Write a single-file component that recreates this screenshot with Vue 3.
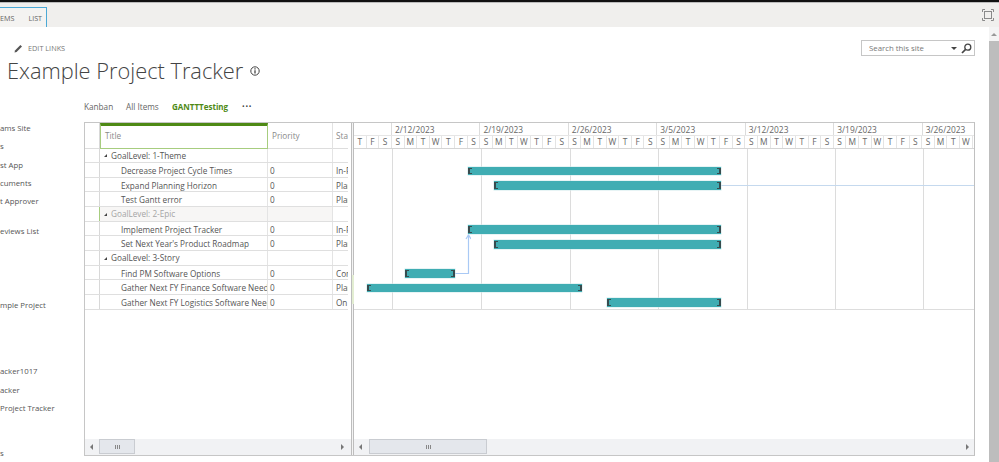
<template>
  <div class="page">
    <div class="blackbar"></div>
    <div class="ribbon">
      <div class="tab">
        <span class="tab-item">EMS</span>
        <span class="tab-item">LIST</span>
      </div>
      <svg class="focus-icon" width="12" height="12" viewBox="0 0 12 12" fill="none" stroke="#8a8a8a">
        <path d="M0.5 3V0.5H3M9 0.5H11.5V3M11.5 9V11.5H9M3 11.5H0.5V9" />
        <rect x="2.5" y="2.5" width="7" height="7" />
      </svg>
    </div>

    <div class="workspace">
      <div class="content">
        <div class="head">
          <div class="head-left">
            <div class="edit-links">
              <svg width="9" height="9" viewBox="0 0 9 9"><path d="M0.5 8.5L1 6.4L6.4 1L8 2.6L2.6 8Z" fill="#555" /></svg>
              <span>EDIT LINKS</span>
            </div>
            <div class="title-line">
              <h1>Example Project Tracker</h1>
              <svg width="10" height="10" viewBox="0 0 10 10" fill="none">
                <circle cx="5" cy="5" r="4.2" stroke="#444" />
                <path d="M5 4.2V7.6M5 2.2V3.4" stroke="#444" stroke-width="1.3" />
              </svg>
            </div>
          </div>
          <div class="search">
            <span class="search-text">Search this site</span>
            <span class="search-caret"></span>
            <svg width="11" height="11" viewBox="0 0 11 11" fill="none" stroke="#444">
              <circle cx="6.8" cy="4.2" r="3" stroke-width="1.3" />
              <path d="M4.6 6.4L1 10" stroke-width="1.7" />
            </svg>
          </div>
        </div>

        <div class="body">
          <nav class="side">
            <div v-for="item in navItems" :key="item.text + item.gap" class="side-item" :style="{ marginTop: item.gap + 'px' }">{{ item.text }}</div>
          </nav>

          <main class="main">
            <div class="views">
              <span class="view view-kanban">Kanban</span>
              <span class="view view-all">All Items</span>
              <span class="view view-active">GANTTTesting</span>
              <span class="view-more">•••</span>
            </div>

            <div class="gantt">
              <section class="pane-left">
                <div class="table">
                  <div class="thead">
                    <div class="cell-sel"></div>
                    <div class="th th-title">Title</div>
                    <div class="th">Priority</div>
                    <div class="th th-last">Status</div>
                  </div>
                  <div v-for="row in rows" :key="row.title" class="tr" :class="{ 'tr-epic': row.selected }">
                    <div class="cell-sel"></div>
                    <div class="td td-title" :class="row.group ? 'is-group' : 'is-task'">
                      <span v-if="row.group" class="caret"></span>{{ row.title }}
                    </div>
                    <div class="td td-line">{{ row.priority }}</div>
                    <div class="td td-status">{{ row.status }}</div>
                  </div>
                </div>
                <div class="hscroll hscroll-left">
                  <span class="arrow arrow-l"></span>
                  <span class="thumb thumb-left"><i></i></span>
                  <span class="arrow arrow-r"></span>
                </div>
              </section>

              <div class="splitter"><span class="splitter-handle"></span></div>

              <section class="pane-right">
                <div class="timeline">
                  <div class="dates">
                    <div v-for="d in dates" :key="d.label" class="date" :style="{ width: d.days * dayW + 'px' }">{{ d.label }}</div>
                  </div>
                  <div class="days">
                    <div v-for="(d, i) in days" :key="i" class="day" :style="{ width: dayW + 'px' }">{{ d }}</div>
                  </div>
                </div>
                <div class="chart">
                  <span v-for="x in weekLines" :key="x" class="week-line" :style="{ left: x + 'px' }"></span>
                  <span class="today-line"></span>
                  <svg class="link" width="16" height="44" viewBox="0 0 16 44" fill="none" stroke="#a9c9f5" stroke-width="1.2">
                    <path d="M0 40.5H13.5V2" />
                    <path d="M11 6L13.5 2L16 6" />
                  </svg>
                  <div
                    v-for="bar in bars"
                    :key="bar.top"
                    class="bar"
                    :style="{ left: bar.left + 'px', top: bar.top + 'px', width: bar.width + 'px' }"
                  ></div>
                </div>
                <div class="hscroll">
                  <span class="arrow arrow-l arrow-chart"></span>
                  <span class="thumb thumb-right"><i></i></span>
                  <span class="arrow arrow-r"></span>
                </div>
              </section>
            </div>
          </main>
        </div>
      </div>

      <div class="vscroll">
        <span class="vscroll-up"></span>
        <span class="vscroll-thumb"></span>
      </div>
    </div>
  </div>
</template>

<script setup>
const dayW = 12.64

const navItems = [
  { text: 'ams Site', gap: 0 },
  { text: 's', gap: 0 },
  { text: 'st App', gap: 0 },
  { text: 'cuments', gap: 0 },
  { text: 't Approver', gap: 0 },
  { text: 'eviews List', gap: 12 },
  { text: 'mple Project', gap: 55.5 },
  { text: 'acker1017', gap: 47.7 },
  { text: 'acker', gap: 0 },
  { text: 'Project Tracker', gap: 0 },
  { text: 's', gap: 26.7 }
]

const rows = [
  { title: 'GoalLevel: 1-Theme', group: true },
  { title: 'Decrease Project Cycle Times', priority: '0', status: 'In-Progress' },
  { title: 'Expand Planning Horizon', priority: '0', status: 'Planned' },
  { title: 'Test Gantt error', priority: '0', status: 'Planned' },
  { title: 'GoalLevel: 2-Epic', group: true, selected: true },
  { title: 'Implement Project Tracker', priority: '0', status: 'In-Progress' },
  { title: "Set Next Year's Product Roadmap", priority: '0', status: 'Planned' },
  { title: 'GoalLevel: 3-Story', group: true },
  { title: 'Find PM Software Options', priority: '0', status: 'Completed' },
  { title: 'Gather Next FY Finance Software Needs', priority: '0', status: 'Planned' },
  { title: 'Gather Next FY Logistics Software Needs', priority: '0', status: 'On Hold' }
]

const dates = [
  { label: '', days: 3 },
  { label: '2/12/2023', days: 7 },
  { label: '2/19/2023', days: 7 },
  { label: '2/26/2023', days: 7 },
  { label: '3/5/2023', days: 7 },
  { label: '3/12/2023', days: 7 },
  { label: '3/19/2023', days: 7 },
  { label: '3/26/2023', days: 7 }
]

const week = ['S', 'M', 'T', 'W', 'T', 'F', 'S']
const days = ['T', 'F', 'S']
for (let i = 0; i < 46; i++) days.push(week[i % 7])

const weekLines = [38, 126.5, 215.5, 304, 392.5, 480.5, 569]

// left and width in chart pixels, top from the start of the chart body
const bars = [
  { left: 114, top: 17.5, width: 253 },
  { left: 139.5, top: 32, width: 227.5 },
  { left: 114, top: 76, width: 253 },
  { left: 139.5, top: 91, width: 227.5 },
  { left: 51, top: 120, width: 50 },
  { left: 13, top: 134.5, width: 215 },
  { left: 253, top: 149, width: 114 }
]
</script>

<style>
html,
body {
  margin: 0;
  overflow: hidden;
}
</style>

<style scoped>
.page {
  width: 999px;
  height: 462px;
  display: flex;
  flex-direction: column;
  overflow: hidden;
  background: #fff;
  font-family: "Open Sans", "Noto Sans", sans-serif;
  color: #555;
}

.blackbar {
  height: 2px;
  background: #111;
  border-bottom: 1px solid #bbb;
}

.ribbon {
  height: 24px;
  flex: none;
  display: flex;
  align-items: flex-end;
  justify-content: space-between;
  background: #f0efed;
}

.tab {
  width: 47px;
  height: 20px;
  box-sizing: border-box;
  display: flex;
  align-items: center;
  gap: 14px;
  background: #f4f3f1;
  border-top: 1px solid #4ba9d6;
  border-right: 1px solid #4ba9d6;
  font-size: 7.2px;
  color: #666;
}

.focus-icon {
  margin: 0 5px 6px 0;
}

.workspace {
  flex: 1;
  display: flex;
  min-height: 0;
}

.content {
  flex: 1;
  display: flex;
  flex-direction: column;
  min-width: 0;
}

.vscroll {
  width: 10px;
  display: flex;
  flex-direction: column;
  align-items: center;
  background: #f4f4f4;
}

.vscroll-up {
  width: 0;
  height: 0;
  margin: 6px 0 5px;
  border-left: 3px solid transparent;
  border-right: 3px solid transparent;
  border-bottom: 3px solid #999;
}

.vscroll-thumb {
  width: 100%;
  flex: 1;
  background: #bdbdbd;
}

.head {
  display: flex;
  justify-content: space-between;
  height: 70px;
  padding-right: 14px;
}

.head-left {
  padding: 16px 0 0 7px;
}

.edit-links {
  display: flex;
  align-items: center;
  gap: 5px;
  margin-left: 7px;
  height: 10px;
  font-size: 7.3px;
  color: #777;
}

.title-line {
  display: flex;
  align-items: center;
  gap: 7px;
  margin-top: 2px;
}

h1 {
  margin: 0;
  font-size: 21.8px;
  line-height: 32px;
  font-weight: 300;
  color: #444;
}

.search {
  width: 114px;
  height: 16px;
  margin-top: 13px;
  box-sizing: border-box;
  display: flex;
  align-items: center;
  padding: 0 2px 0 7px;
  border: 1px solid #c6c6c6;
  font-size: 7.8px;
  color: #777;
}

.search-text {
  flex: 1;
}

.search-caret {
  width: 0;
  height: 0;
  margin-right: 4px;
  border-left: 3px solid transparent;
  border-right: 3px solid transparent;
  border-top: 3px solid #444;
}

.body {
  flex: 1;
  display: flex;
  min-height: 0;
}

.side {
  width: 84px;
  flex: none;
  padding-top: 22px;
  overflow: hidden;
}

.side-item {
  height: 18.3px;
  line-height: 18.3px;
  font-size: 7.8px;
  color: #555;
  white-space: nowrap;
}

.main {
  width: 891px;
  display: flex;
  flex-direction: column;
}

.views {
  height: 18px;
  margin-bottom: 7px;
  display: flex;
  align-items: center;
  font-size: 8.2px;
  color: #666;
}

.view-kanban {
  width: 42px;
}

.view-all {
  width: 46px;
}

.view-active {
  width: 70px;
  font-size: 8px;
  font-weight: 700;
  color: #4e8a15;
}

.view-more {
  font-size: 7px;
  letter-spacing: 0.8px;
  color: #444;
}

.gantt {
  width: 891px;
  height: 334px;
  box-sizing: border-box;
  display: flex;
  border: 1px solid #c6c6c6;
  border-right-color: #c0c0c0;
}

.pane-left {
  width: 266px;
  flex: none;
  display: flex;
  flex-direction: column;
  overflow: hidden;
}

.table {
  flex: 1;
  width: 263px;
}

.thead {
  display: grid;
  grid-template-columns: 15px 168px 65px 15px;
  height: 25.5px;
  border-bottom: 1px solid #ddd;
  box-sizing: border-box;
  color: #8a8a8a;
  font-size: 8.2px;
}

.cell-sel {
  border-right: 1px solid #d8d8d8;
}

.th {
  display: flex;
  align-items: center;
  padding: 0 0 2px 4px;
  border-right: 1px solid #e2e2e2;
  overflow: hidden;
  box-sizing: border-box;
}

.th-last {
  border-right: none;
  padding-left: 3px;
  white-space: nowrap;
}

.th-title {
  border: 1px solid #a7cd7f;
  border-top: 3px solid #4e8a15;
  padding-bottom: 4px;
  height: 26px;
}

.tr {
  display: grid;
  grid-template-columns: 15px 168px 65px 15px;
  height: 14.65px;
  box-sizing: border-box;
  border-bottom: 1px solid #dfdfdf;
  font-size: 8.2px;
  line-height: 14.6px;
}

.td {
  overflow: hidden;
  white-space: nowrap;
  box-sizing: border-box;
  padding-top: 1px;
  color: #555;
}

.td-title {
  border-right: 1px solid #e4e4e4;
}

.td-line {
  padding-left: 2px;
  border-right: 1px solid #e4e4e4;
}

.td-status {
  padding-left: 3px;
}

.is-group {
  display: flex;
  align-items: center;
  padding-left: 4px;
}

.is-task {
  padding-left: 21px;
}

.caret {
  width: 0;
  height: 0;
  margin-right: 4px;
  border-left: 3px solid transparent;
  border-bottom: 3px solid #444;
}

.tr-epic .td-title,
.tr-epic .td-line {
  background: #f7f6f5;
}

.tr-epic .td {
  color: #a5a5a5;
}

.tr-epic .cell-sel {
  border-right: 1px solid #a7cd7f;
}

.hscroll {
  height: 16px;
  flex: none;
  position: relative;
  display: flex;
  align-items: center;
  justify-content: space-between;
  background: #f1f2f4;
  padding: 0 5px;
  box-sizing: border-box;
}

.hscroll-left {
  padding-right: 7px;
}

.arrow {
  width: 0;
  height: 0;
  border-top: 3px solid transparent;
  border-bottom: 3px solid transparent;
}

.arrow-l {
  border-right: 3px solid #777;
}

.arrow-r {
  border-left: 3px solid #777;
}

.thumb {
  position: absolute;
  top: 0;
  bottom: 1px;
  display: flex;
  align-items: center;
  justify-content: center;
  box-sizing: border-box;
  background: #e4e7ec;
  border: 1px solid #c9ccd1;
}

.thumb i {
  width: 5px;
  height: 4px;
  background: repeating-linear-gradient(90deg, #888 0 1px, transparent 1px 2px);
}

.thumb-left {
  left: 14px;
  width: 36px;
}

.thumb-right {
  left: 15px;
  width: 118px;
}

.splitter {
  width: 3px;
  flex: none;
  position: relative;
  box-sizing: border-box;
  background: #f4f4f4;
  border-left: 1px solid #bdbdbd;
  border-right: 1px solid #bdbdbd;
}

.splitter-handle {
  position: absolute;
  left: 0;
  top: 152px;
  width: 2px;
  height: 29px;
  background: #e3eed2;
}

.pane-right {
  flex: 1;
  min-width: 0;
  display: flex;
  flex-direction: column;
  overflow: hidden;
}

.timeline {
  flex: none;
  border-bottom: 1px solid #d5d5d5;
}

.dates,
.days {
  display: flex;
  white-space: nowrap;
  color: #666;
}

.dates {
  height: 13px;
  box-sizing: border-box;
  font-size: 8.4px;
  line-height: 13px;
  border-bottom: 1px solid #e6e6e6;
}

.date {
  flex: none;
  box-sizing: border-box;
  padding-left: 3px;
  border-right: 1px solid #dcdcdc;
  overflow: hidden;
}

.days {
  height: 12px;
  font-size: 8.4px;
  line-height: 12px;
}

.day {
  flex: none;
  box-sizing: border-box;
  text-align: center;
  border-right: 1px solid #e4e4e4;
}

.chart {
  flex: 1;
  position: relative;
  overflow: hidden;
}

.chart::after {
  content: "";
  position: absolute;
  left: 0;
  right: 0;
  top: 160px;
  height: 1px;
  background: #ddd;
}

.week-line {
  position: absolute;
  top: 0;
  height: 160px;
  width: 1px;
  background: #dcdcdc;
}

.today-line {
  position: absolute;
  left: 367px;
  right: 0;
  top: 36px;
  height: 1px;
  background: #c5d9ee;
}

.link {
  position: absolute;
  left: 101px;
  top: 84px;
}

.bar {
  position: absolute;
  height: 8.5px;
  box-sizing: border-box;
  background: #40adb3;
  box-shadow: 0 0 0 0.5px #d0eaeb;
}

.bar::before,
.bar::after {
  content: "";
  position: absolute;
  top: 1px;
  bottom: 1px;
  width: 4px;
  box-sizing: border-box;
  border: 1px solid #374b4e;
}

.bar::before {
  left: 0;
  border-right: none;
  border-left-width: 2px;
}

.bar::after {
  right: 0;
  border-left: none;
  border-right-width: 2px;
}
</style>
